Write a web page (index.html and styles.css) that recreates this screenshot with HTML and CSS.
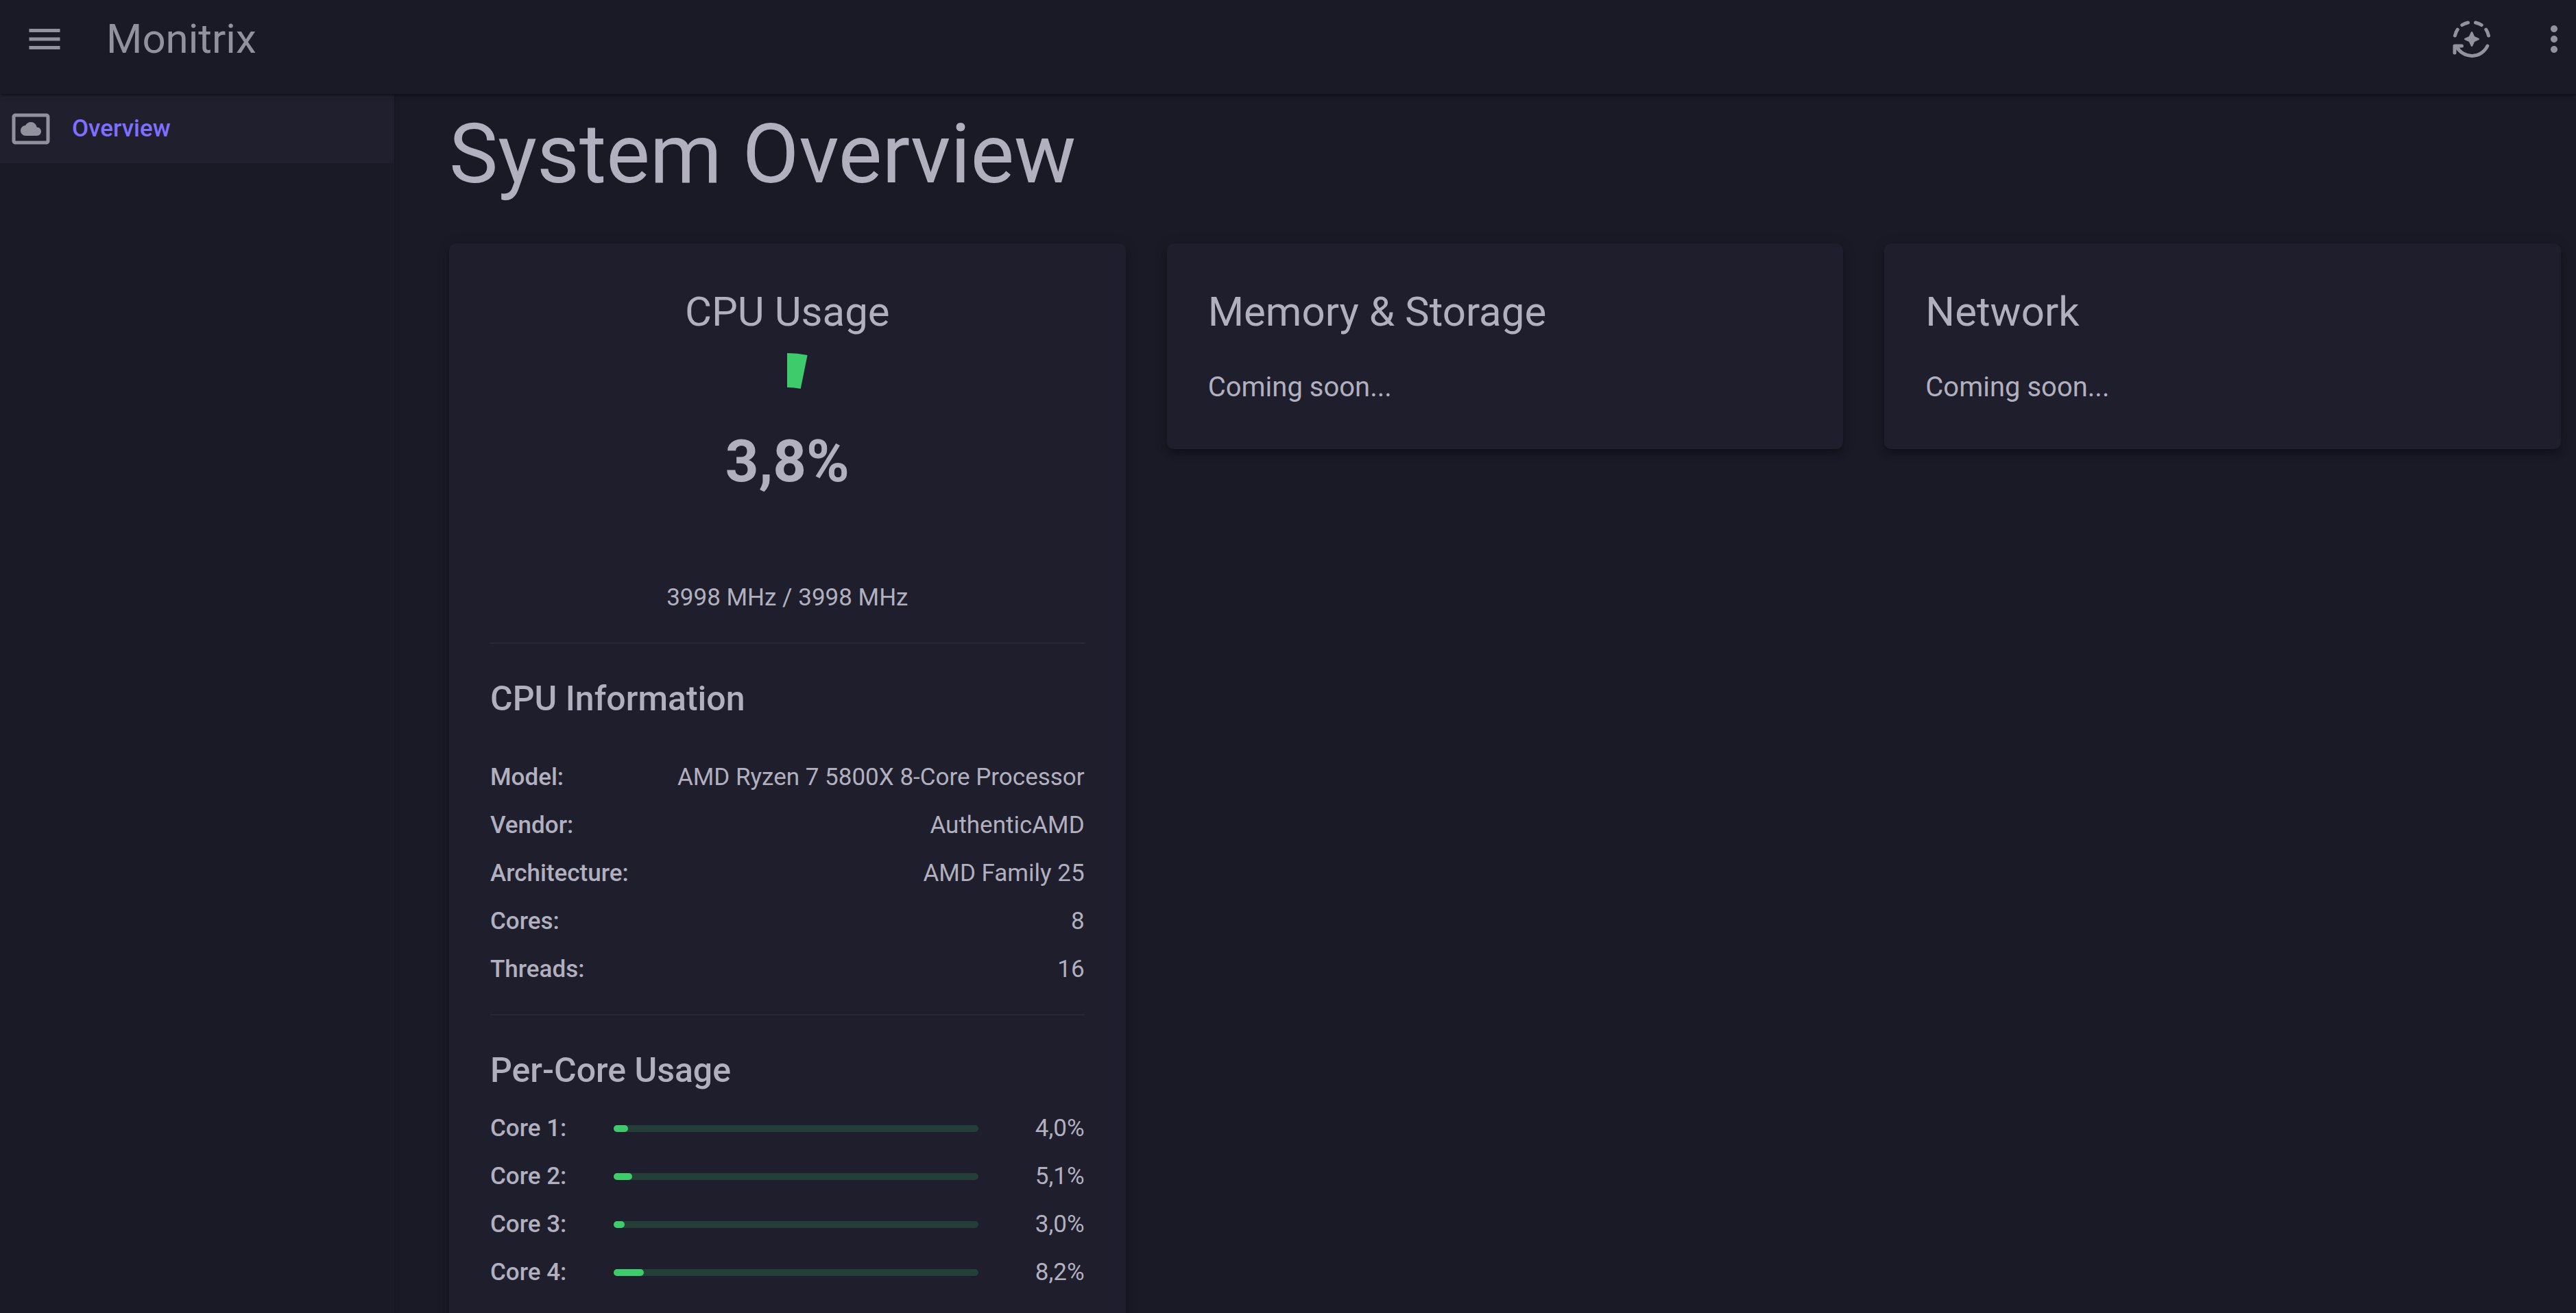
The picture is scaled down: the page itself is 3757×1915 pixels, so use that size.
FILE: index.html
```html
<!DOCTYPE html>
<html lang="en">
<head>
  <meta charset="utf-8">
  <meta name="viewport" content="width=device-width, initial-scale=1">
  <title>Monitrix</title>
  <link rel="stylesheet" href="styles.css">
</head>
<body>
  <div class="app">
    <header class="appbar">
      <button class="icon-button" type="button" aria-label="Toggle menu">
        <svg class="icon" viewBox="0 0 24 24" aria-hidden="true"><path d="M3 18h18v-2H3v2zm0-5h18v-2H3v2zm0-7v2h18V6H3z"/></svg>
      </button>
      <span class="brand">Monitrix</span>
      <button class="icon-button" type="button" aria-label="Switch theme">
        <svg class="icon" viewBox="0 0 60 60" aria-hidden="true">
          <g fill="none" stroke="currentColor" stroke-width="5" stroke-linecap="round" stroke-linejoin="round">
            <path d="M5.500 25A25 25 0 0 1 9.200 16.200M15.800 9.500A25 25 0 0 1 24.500 6M35.500 6A25 25 0 0 1 44.200 9.500M50.800 16.200A25 25 0 0 1 54.500 25"/>
            <path d="M52.800 40A25 25 0 0 1 8 41M15.500 40H5V50"/>
          </g>
          <path d="M30 19Q31 19 31.300 20L34 26L40 28.700Q41 29 41 30Q41 31 40 31.300L34 34L31.300 40Q31 41 30 41Q29 41 28.700 40L26 34L20 31.300Q19 31 19 30Q19 29 20 28.700L26 26L28.700 20Q29 19 30 19z"/>
        </svg>
      </button>
      <button class="icon-button" type="button" aria-label="More options">
        <svg class="icon" viewBox="0 0 24 24" aria-hidden="true"><path d="M12 8c1.100 0 2-.9 2-2s-.9-2-2-2-2 .9-2 2 .9 2 2 2zm0 2c-1.100 0-2 .9-2 2s.9 2 2 2 2-.9 2-2-.9-2-2-2zm0 6c-1.100 0-2 .9-2 2s.9 2 2 2 2-.9 2-2-.9-2-2-2z"/></svg>
      </button>
    </header>

    <div class="body">
      <nav class="drawer" aria-label="Main">
        <a class="nav-link" href="#overview" aria-current="page">
          <svg class="icon nav-icon" viewBox="0 0 24 24" aria-hidden="true"><path d="M9 16h6.500c1.380 0 2.500-1.120 2.500-2.500S16.880 11 15.500 11h-.05c-.24-1.690-1.690-3-3.450-3-1.400 0-2.600.83-3.160 2.020h-.16C7.170 10.180 6 11.450 6 13c0 1.660 1.340 3 3 3zM21 3H3c-1.100 0-2 .9-2 2v14c0 1.100.9 2 2 2h18c1.100 0 2-.9 2-2V5c0-1.100-.9-2-2-2zm0 16.010H3V4.990h18v14.020z"/></svg>
          <span>Overview</span>
        </a>
      </nav>

      <main class="content" id="overview">
        <h1 class="page-title">System Overview</h1>

        <div class="cards">
          <section class="card">
            <h2 class="card-title centered">CPU Usage</h2>
            <div class="gauge">
              <svg class="gauge-chart" viewBox="0 0 300 300" aria-hidden="true"><path d="M150 0A150 150 0 0 1 179.600 2.900L169.700 52A100 100 0 0 0 150 50z"/></svg>
              <strong class="gauge-value">3,8%</strong>
            </div>
            <p class="clock">3998 MHz / 3998 MHz</p>

            <hr class="divider">

            <h3 class="section-title">CPU Information</h3>
            <dl class="facts">
              <div class="fact"><dt>Model:</dt><dd>AMD Ryzen 7 5800X 8-Core Processor</dd></div>
              <div class="fact"><dt>Vendor:</dt><dd>AuthenticAMD</dd></div>
              <div class="fact"><dt>Architecture:</dt><dd>AMD Family 25</dd></div>
              <div class="fact"><dt>Cores:</dt><dd>8</dd></div>
              <div class="fact"><dt>Threads:</dt><dd>16</dd></div>
            </dl>

            <hr class="divider">

            <h3 class="section-title">Per-Core Usage</h3>
            <ul class="cores">
              <li class="core"><span class="core-name">Core 1:</span><span class="track"><span class="fill" style="width: 4%"></span></span><span class="core-value">4,0%</span></li>
              <li class="core"><span class="core-name">Core 2:</span><span class="track"><span class="fill" style="width: 5.1%"></span></span><span class="core-value">5,1%</span></li>
              <li class="core"><span class="core-name">Core 3:</span><span class="track"><span class="fill" style="width: 3%"></span></span><span class="core-value">3,0%</span></li>
              <li class="core"><span class="core-name">Core 4:</span><span class="track"><span class="fill" style="width: 8.2%"></span></span><span class="core-value">8,2%</span></li>
            </ul>
          </section>

          <section class="card">
            <h2 class="card-title">Memory &amp; Storage</h2>
            <p class="card-text">Coming soon...</p>
          </section>

          <section class="card">
            <h2 class="card-title">Network</h2>
            <p class="card-text">Coming soon...</p>
          </section>
        </div>
      </main>
    </div>
  </div>
</body>
</html>
```
FILE: styles.css
```css
:root {
  --background: #1a1a27;
  --surface: #1e1e2d;
  --text: #b2b0bf;
  --muted: #92929f;
  --primary: #7e6fff;
  --success: #3dcb6c;
  --track: #243f38;
  --divider: #292838;
}

* {
  box-sizing: border-box;
}

body,
h1,
h2,
h3,
p,
dl,
dd,
ul {
  margin: 0;
}

body {
  background: var(--background);
  color: var(--text);
  font-family: Roboto, "Liberation Sans", sans-serif;
  font-size: 35px;
  line-height: 50px;
}

.app {
  display: flex;
  flex-direction: column;
  height: 100vh;
}

.appbar {
  display: flex;
  align-items: center;
  z-index: 2;
  padding: 0 0 23px 5px;
  background: var(--background);
  color: var(--muted);
  box-shadow: 0 5px 2px -2px rgba(0, 0, 0, 0.2), 0 2px 2px rgba(0, 0, 0, 0.14), 0 2px 8px rgba(0, 0, 0, 0.12);
}

.icon {
  display: block;
  flex: none;
  width: 60px;
  height: 60px;
  fill: currentColor;
}

.icon-button {
  padding: 27px 30px;
  border: 0;
  background: none;
  color: inherit;
  cursor: pointer;
}

.icon-button:last-child {
  padding-right: 2px;
}

.brand {
  flex: 1;
  margin-left: 30px;
  font-size: 60px;
  line-height: 80px;
}

.body {
  display: flex;
  flex: 1;
  min-height: 0;
}

.drawer {
  flex: none;
  width: 575px;
  z-index: 1;
  background: var(--background);
  box-shadow: 0 5px 2px -2px rgba(0, 0, 0, 0.2), 0 2px 2px rgba(0, 0, 0, 0.14), 0 2px 8px rgba(0, 0, 0, 0.12);
}

.nav-link {
  display: flex;
  align-items: center;
  gap: 30px;
  padding: 20px 15px;
  background: #201f2e;
  color: var(--primary);
  font-weight: 500;
  line-height: 61px;
  text-decoration: none;
}

.nav-icon {
  color: var(--muted);
}

.content {
  flex: 1;
  min-width: 0;
  padding: 18px 22px 60px 80px;
  overflow-y: auto;
  scrollbar-width: none;
}

.page-title {
  margin-bottom: 60px;
  font-size: 120px;
  font-weight: 400;
  line-height: 140px;
}

.cards {
  display: grid;
  grid-template-columns: repeat(3, minmax(0, 1fr));
  align-items: start;
  gap: 60px;
}

.card {
  padding: 60px;
  border-radius: 10px;
  background: var(--surface);
  box-shadow: 0 8px 8px -5px rgba(0, 0, 0, 0.2), 0 8px 10px rgba(0, 0, 0, 0.14), 0 2px 20px rgba(0, 0, 0, 0.12);
}

.card-title {
  font-size: 60px;
  font-weight: 400;
  line-height: 80px;
}

.centered {
  text-align: center;
}

.card-text {
  margin-top: 40px;
  font-size: 40px;
  line-height: 60px;
}

.gauge {
  display: grid;
  justify-items: center;
  align-items: center;
  margin-top: 20px;
}

.gauge-chart,
.gauge-value {
  grid-area: 1 / 1;
}

.gauge-chart {
  width: 300px;
  height: 300px;
  fill: var(--success);
}

.gauge-value {
  padding-top: 16px;
  font-size: 85px;
  font-weight: 700;
  line-height: 104px;
}

.clock {
  margin-top: 32px;
  text-align: center;
}

.divider {
  height: 2px;
  margin: 40px 0;
  border: 0;
  background: var(--divider);
}

.section-title {
  font-size: 50px;
  font-weight: 500;
  line-height: 80px;
}

.facts {
  display: grid;
  gap: 20px;
  margin-top: 50px;
}

.fact {
  display: flex;
  justify-content: space-between;
}

.fact dt,
.core-name {
  font-weight: 500;
}

.cores {
  display: grid;
  gap: 20px;
  margin-top: 20px;
  padding: 0;
  list-style: none;
}

.core {
  display: grid;
  grid-template-columns: 150px minmax(0, 1fr) 125px;
  align-items: center;
  gap: 30px;
}

.core-value {
  text-align: right;
}

.track {
  height: 10px;
  border-radius: 5px;
  background: var(--track);
}

.fill {
  display: block;
  height: 10px;
  border-radius: 5px;
  background: var(--success);
}
```
